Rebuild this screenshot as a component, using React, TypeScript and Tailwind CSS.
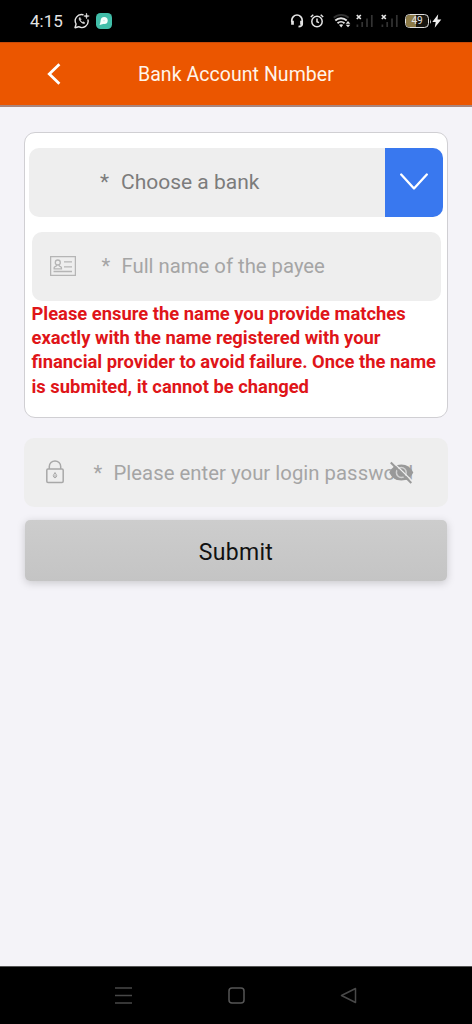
import type { ReactNode } from "react";

function StatusBar() {
  return (
    <div className="flex h-[42px] shrink-0 items-start bg-black pt-[11px] text-[#e4e4e4]">
      <span className="ml-[30px] w-[44px] text-[17px] leading-[20px]">4:15</span>
      <svg className="mt-[2px] h-4 w-4" viewBox="0 0 16 16" fill="none" stroke="currentColor" strokeWidth="1.4" strokeLinecap="round" strokeLinejoin="round">
        <path d="M9 1.7A6.3 6.3 0 0 0 2.1 11L1 14.7l3.7-1A6.3 6.3 0 0 0 14 7" />
        <path d="M5.6 4.6c-.9.7-.6 2.3 1.1 4.1s3.5 2.3 4.2 1.2l-1.8-1.1-.9.7-1.9-2 .6-.9z" fill="currentColor" strokeWidth=".6" />
        <path d="M12.5.2 13.1 2.4l2.2.6-2.2.7-.6 2.1-.6-2.1-2.1-.7 2.1-.6z" fill="currentColor" strokeWidth=".5" />
      </svg>
      <svg className="mt-[2px] ml-[6px] h-4 w-4" viewBox="0 0 16 16">
        <rect width="16" height="16" rx="4.5" fill="#41bea9" />
        <circle cx="8.2" cy="7.4" r="3.5" fill="#f4fffc" />
        <path d="M4.900 7.500 3.600 12 8 10.800z" fill="#f4fffc" />
        <circle cx="8" cy="7.6" r=".9" fill="#c9efe8" />
      </svg>
      <div className="ml-[178px] flex items-start">
        <svg className="mt-[3px] h-[14px] w-[14px]" viewBox="0 0 14 14" fill="none" stroke="currentColor" strokeWidth="1.7">
          <path d="M1.8 8V6.2a5 5 0 0 1 10.400 0V10q0 2.600-3.700 2.600" />
          <path d="M2.500 6.8v4M11.500 6.8v4" strokeWidth="2.7" />
        </svg>
        <svg className="mt-[3px] ml-[6px] h-[14px] w-[14px]" viewBox="0 0 14 14" fill="none" stroke="currentColor" strokeWidth="1.5">
          <circle cx="7" cy="7.5" r="5.2" />
          <path d="M7 4.6v3.2l2 .8M.8 3 3.3.8M13.2 3 10.7.8" />
        </svg>
        <svg className="mt-[2px] ml-[9px] h-4 w-[18px]" viewBox="0 0 18 16" fill="none" stroke="currentColor" strokeWidth="1.9">
          <path d="M.8 4.8a10.8 10.8 0 0 1 14.8 0" stroke="#333" />
          <path d="M2.3 7.500a8.300 8.300 0 0 1 11.400 0M4.500 10.200a5.200 5.200 0 0 1 7 0" />
          <path d="m6 11.700 2.200 2.800 2-2.800q-2-1.100-4.200 0M15 8.100l-2.300 2.700h4.600zM15 14.300l-2.300-2.500h4.600z" fill="currentColor" stroke="none" />
        </svg>
        {["first", "second"].map((sim, index) => (
          <svg key={sim} className={index === 0 ? "mt-[3px] ml-[5px] h-[14px] w-[17px]" : "mt-[3px] ml-[8px] h-[14px] w-[17px]"} viewBox="0 0 17 14" fill="none">
            <path d="m.8 1 4 4M4.8 1l-4 4" stroke="currentColor" strokeWidth="1.7" />
            <path d="M1.4 10.5V13M6.2 8v5M11 4.5V13M15.8 1v12" stroke="#333" strokeWidth="1.7" />
          </svg>
        ))}
        <div className="relative mt-[3px] ml-[7px] h-[14px] w-[24px] overflow-hidden rounded-[4.5px] border-[1.500px] border-[#dedede] bg-[#17150f]">
          <div className="h-full w-[10px] bg-[#8c7a47]" />
          <span className="absolute inset-0 text-center text-[10px] leading-[12px]">49</span>
        </div>
        <svg className="mt-[2px] ml-[1px] h-4 w-[12px]" viewBox="0 0 12 16" fill="#f0f0f0">
          <path d="M0 6v5q1.6-2.5 0-5M8.200 1.300 2.300 9h3.400l-1 5.700 6.600-8.200H7.500z" />
        </svg>
      </div>
    </div>
  );
}

function Header() {
  return (
    <header className="flex h-[65px] shrink-0 items-center border-t border-b-2 border-t-[#c84a09] border-b-[#a8857e] bg-[#eb5600] text-[#fff5ea]">
      <svg className="ml-[47px] h-[22px] w-[14px]" viewBox="0 0 14 22" fill="none" stroke="white" strokeWidth="2.8">
        <path d="M12.4 1.2 2.3 11l10.1 9.8" />
      </svg>
      <h1 className="mt-[2px] ml-[77px] text-[19.5px] leading-6 tracking-[0.05px] whitespace-nowrap">Bank Account Number</h1>
    </header>
  );
}

function Field({ icon, children }: { icon: ReactNode; children: ReactNode }) {
  return (
    <div className="relative flex h-[69px] items-center rounded-[10px] bg-[#eee] text-[20.3px] text-[#a5a5a5]">
      {icon}
      {children}
    </div>
  );
}

function CardIcon() {
  return (
    <svg className="mb-[2px] ml-[18px] h-[20px] w-[26px]" viewBox="0 0 26 20" fill="none" stroke="#b5b5b5" strokeWidth="1.3">
      <rect x=".6" y=".6" width="24.8" height="18.8" />
      <circle cx="7.800" cy="6.500" r="2.500" />
      <path d="M6.600 8.700q0 1.600-1.500 2-1.300.5-1 2.100h7.400q.3-1.600-1-2.100-1.500-.4-1.500-2M14 5.800h8M14 10.800h8M3.500 15.500h18.500" />
    </svg>
  );
}

function LockIcon() {
  return (
    <svg className="mb-[2px] ml-[22px] h-[24px] w-[18px]" viewBox="0 0 18 24" fill="none" stroke="#a8a8a8" strokeWidth="1.5">
      <rect x=".8" y="9" width="16.4" height="13.5" rx="1.2" />
      <path d="M3.300 9V6.600a5.700 5.700 0 0 1 11.400 0V9" />
      <path d="m9 12.500-1.700 3q0 1.900 1.700 2.400 1.700-.5 1.700-2.400zM9 15v2.500" strokeWidth="1" />
    </svg>
  );
}

function HiddenEye() {
  return (
    <svg className="absolute top-[23px] right-[34px] h-6 w-[26px]" viewBox="0 0 26 24" fill="none" stroke="#999">
      <path d="M1.200 11.500Q5 3.500 13.300 3.500T25.300 11.500Q21.500 19.500 13.300 19.500T1.200 11.500Z" fill="#999" stroke="none" />
      <circle cx="13.300" cy="11.500" r="4.900" stroke="#d2d2d2" strokeWidth="1.500" />
      <path d="m4.300.500 20.500 20" stroke="#eee" strokeWidth="1.200" />
      <path d="m2.800 1.500 20.500 20.500" strokeWidth="2" />
    </svg>
  );
}

export default function App() {
  return (
    <div className="flex h-[1024px] w-[472px] flex-col overflow-hidden bg-[#f4f3f8] font-[Roboto,sans-serif]">
      <StatusBar />
      <Header />
      <main className="flex flex-1 flex-col px-[24px] pt-[25px]">
        <section className="flex h-[286px] flex-col rounded-[11px] border-[1.5px] border-[#d0cfd3] bg-white pt-[14.500px]">
          <div className="ml-[4px] flex h-[69px] w-[414px] shrink-0 items-center overflow-hidden rounded-[10px] bg-[#eee] text-[21px] text-[#7c7c7c]">
            <span className="mt-[2px] ml-[71px] w-[21px]">*</span>
            <span className="mt-[2px] flex-1">Choose a bank</span>
            <button className="flex h-full w-[58px] items-center justify-center bg-[#3978ef]" aria-label="Show banks">
              <svg className="h-[18px] w-[28px]" viewBox="0 0 28 18" fill="none" stroke="white" strokeWidth="2.3" strokeLinecap="round" strokeLinejoin="round">
                <path d="m1.200 1.500 12.800 14 12.800-14" />
              </svg>
            </button>
          </div>
          <div className="mt-[15.500px] ml-[6.500px] w-[409px]">
            <Field icon={<CardIcon />}>
              <span className="ml-[26px] w-[20px]">*</span>
              <span className="whitespace-nowrap">Full name of the payee</span>
            </Field>
          </div>
          <p className="mt-px ml-[6.500px] text-[18.360px] leading-[24.200px] font-bold whitespace-nowrap text-[#df1519]">
            Please ensure the name you provide matches<br />
            exactly with the name registered with your<br />
            financial provider to avoid failure. Once the name<br />
            is submited, it cannot be changed
          </p>
        </section>
        <div className="mt-[20px]">
          <Field icon={<LockIcon />}>
            <span className="mt-[2px] ml-[29.500px] w-[20px]">*</span>
            <span className="mt-[2px] tracking-[0.040px] whitespace-nowrap">Please enter your login password</span>
            <HiddenEye />
          </Field>
        </div>
        <button className="mt-[13px] ml-px h-[61px] w-[422px] rounded-[5px] bg-linear-to-b from-[#cdcdcd] to-[#c4c4c4] pt-[5px] text-[23px] tracking-[0.300px] text-[#111] shadow-[0_2px_9px_rgba(0,0,0,0.18)]">Submit</button>
      </main>
      <nav className="flex h-[58px] shrink-0 items-center justify-between border-t border-[#555] bg-black px-[115px]">
        <svg className="h-[17px] w-[17px]" viewBox="0 0 17 17" stroke="#484848" strokeWidth="1.500"><path d="M0 1h17M0 8.500h17M0 16h17" /></svg>
        <svg className="h-[17px] w-[17px]" viewBox="0 0 17 17" fill="none" stroke="#555" strokeWidth="1.500"><rect x="1" y="1" width="15" height="15" rx="3" /></svg>
        <svg className="h-[17px] w-[17px]" viewBox="0 0 17 17" fill="none" stroke="#484848" strokeWidth="1.500" strokeLinejoin="round"><path d="m1.500 8.500 14-7v14z" /></svg>
      </nav>
    </div>
  );
}
